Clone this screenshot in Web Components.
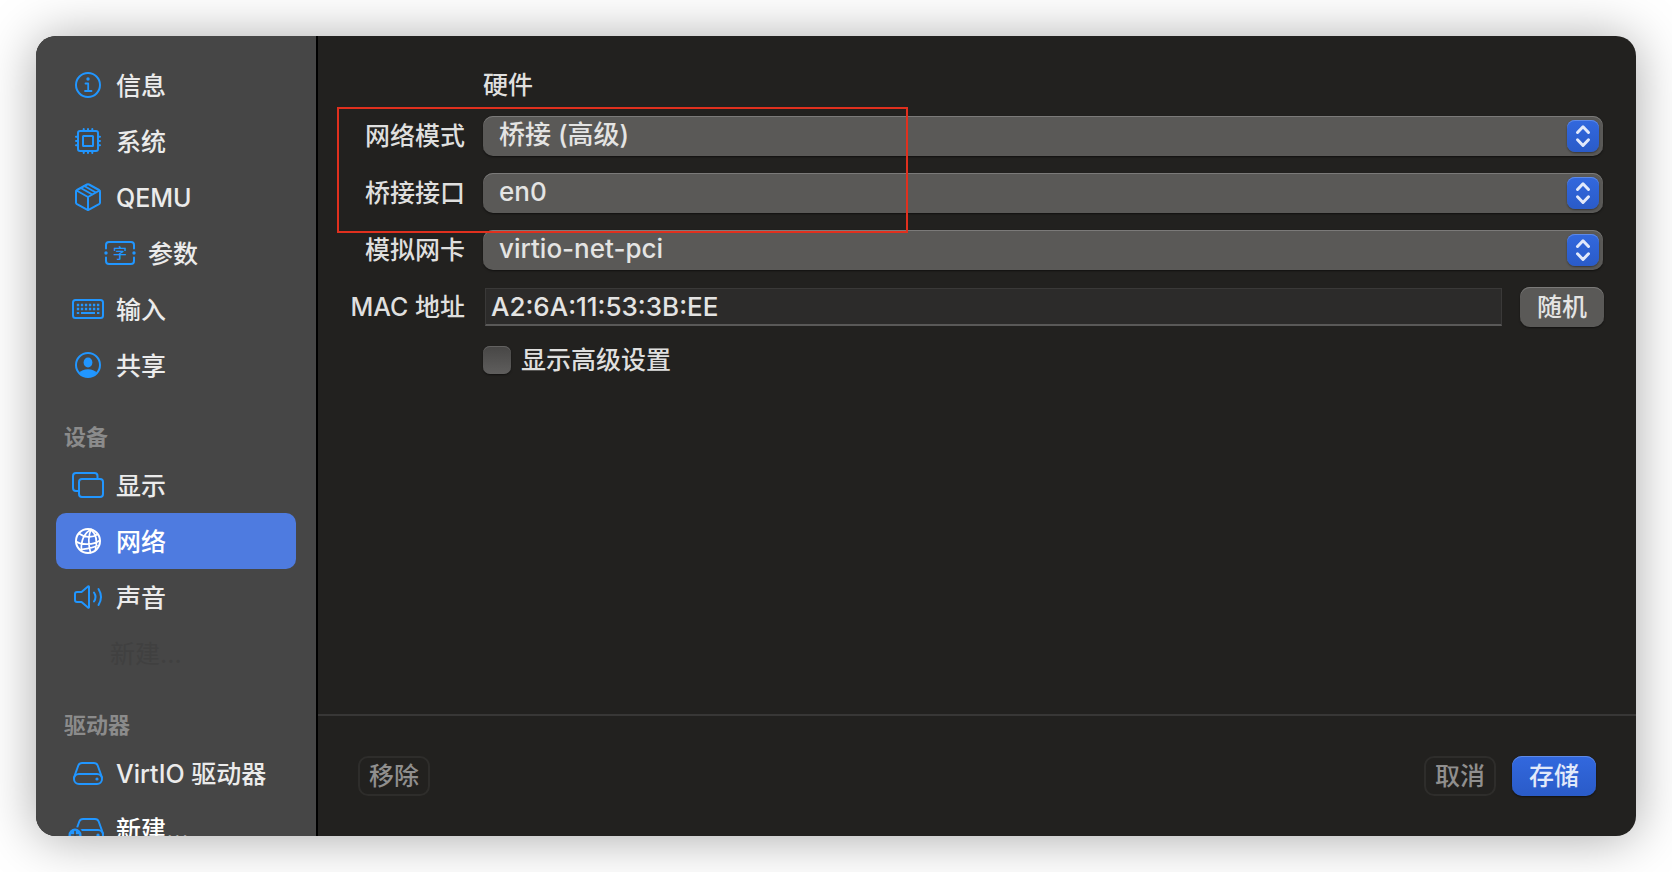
<!DOCTYPE html>
<html lang="zh-CN">
<head>
<meta charset="utf-8">
<meta name="viewport" content="width=device-width, initial-scale=1">
<title>网络</title>
<style>
body {
	margin: 0;
	background: #fff;
	font-family: Inter, "Noto Sans CJK SC", sans-serif;
	font-size: 25px;
	font-weight: 500;
	line-height: 40px;
	color: #dfdfde;
}
</style>
</head>
<body>

<settings-window>
	<side-nav slot="sidebar">
		<nav-item icon="info">信息</nav-item>
		<nav-item icon="cpu">系统</nav-item>
		<nav-item icon="box">QEMU</nav-item>
		<nav-item icon="args" indent>参数</nav-item>
		<nav-item icon="keyboard">输入</nav-item>
		<nav-item icon="person">共享</nav-item>
		<nav-heading>设备</nav-heading>
		<nav-item icon="displays">显示</nav-item>
		<nav-item icon="globe" active>网络</nav-item>
		<nav-item icon="speaker">声音</nav-item>
		<nav-item dimmed>新建...</nav-item>
		<nav-heading>驱动器</nav-heading>
		<nav-item icon="drive">VirtIO 驱动器</nav-item>
		<nav-item icon="driveplus" bright>新建...</nav-item>
	</side-nav>

	<settings-form heading="硬件">
		<select-field label="网络模式" value="桥接 (高级)"></select-field>
		<select-field label="桥接接口" value="en0"></select-field>
		<select-field label="模拟网卡" value="virtio-net-pci"></select-field>
		<text-field label="MAC 地址" value="A2:6A:11:53:3B:EE">
			<push-button>随机</push-button>
		</text-field>
		<check-field label="显示高级设置"></check-field>
	</settings-form>

	<push-button slot="remove" kind="outline">移除</push-button>
	<push-button slot="actions" kind="outline">取消</push-button>
	<push-button slot="actions" kind="primary">存储</push-button>
</settings-window>

<script>
//Icons, all drawn on a 36x36 grid
const drive = `
	<path d="M4 22.5 8.3 10.5Q9.3 8 12 8h12q2.700 0 3.700 2.500L32 22.500"/>
	<rect x="4" y="19" width="28" height="10" rx="5"/>
	<circle cx="27" cy="24" r="1.600" fill="currentColor" stroke="none"/>`;

const icons = {
	info: `
		<circle cx="18" cy="18" r="12"/>
		<circle cx="18" cy="12" r="1.700" fill="currentColor" stroke="none"/>
		<path d="M15.500 16.500h2.700v7.500M15 24h6.500" stroke-width="1.800"/>`,
	cpu: `
		<rect x="8" y="8" width="20" height="20" rx="2"/>
		<rect x="13" y="13" width="10" height="10" rx="0.500"/>
		<path d="M13.700 8V6M18 8V6M22.300 8V6M13.700 28v2M18 28v2M22.300 28v2M8 13.700H6M8 18H6M8 22.300H6M28 13.700h2M28 18h2M28 22.300h2"/>`,
	box: `
		<path d="M17 5.500Q18 5 19 5.500L29 11Q30 11.600 30 12.700V23.500Q30 24.600 29 25.200L19 30.600Q18 31.200 17 30.600L7 25.200Q6 24.600 6 23.500V12.700Q6 11.600 7 11Z"/>
		<path d="M6.500 11.500 18 18 29.500 11.500M18 18V31M10.800 9 22.300 15.500M14.300 7 25.800 13.500"/>`,
	args: `
		<path d="M4 13.500V10q0-3 3-3h22q3 0 3 3v3.500M4 22.500V26q0 3 3 3h22q3 0 3-3v-3.500"/>
		<circle cx="4" cy="18" r="1.700" fill="currentColor" stroke="none"/>
		<circle cx="32" cy="18" r="1.700" fill="currentColor" stroke="none"/>
		<text x="18" y="23" font-size="14" font-weight="500" text-anchor="middle" fill="currentColor" stroke="none">字</text>`,
	keyboard: `
		<rect x="3" y="9" width="30" height="18" rx="2.500"/>
		<path d="M6.800 14h22.500M6.800 18h22.500" stroke-width="2.400" stroke-linecap="butt" stroke-dasharray="2.400 1.620"/>
		<path d="M6.800 22h2.400M11 22h14M27 22h2.400" stroke-width="2.200" stroke-linecap="butt"/>`,
	person: `
		<circle cx="18" cy="18" r="12"/>
		<ellipse cx="18" cy="15.500" rx="4.400" ry="5" fill="currentColor" stroke="none"/>
		<path d="M9.500 26C11 23.500 14 22.300 18 22.300s7 1.200 8.500 3.700Q23 30 18 30t-8.500-4Z" fill="currentColor" stroke="none"/>`,
	displays: `
		<path d="M9 24H6q-3 0-3-3V9q0-3 3-3h18.500Q27.500 6 27.500 9v3"/>
		<rect x="9" y="12" width="24" height="18" rx="3"/>`,
	globe: `
		<circle cx="18" cy="18" r="12"/>
		<path d="M21 6.500C18.500 12 18 20 20.500 29.700M21 6.500C15 9.500 10.500 17 11.500 27.500M21 6.500c5 4.500 6.500 12 4.500 20M9 10.500c5 4 13 4.500 18.500 1M6 18.500c6 4 17.500 3.500 23.700-1M10.500 26.500c4-.500 12-1 16.500-4" stroke-width="1.700"/>`,
	speaker: `
		<path d="M5 15q0-2 2-2h4.500L18 7.400q1-.400 1 .600v20q0 1-1 .600L11.500 23H7q-2 0-2-2Z"/>
		<path d="M24 13.500q3 4.500 0 9M28.500 10q5 8 0 16"/>`,
	drive: drive,
	driveplus: `
		<g transform="translate(1 0)">${drive}</g>
		<circle cx="5" cy="24" r="8" fill="#464646" stroke="none"/>
		<circle cx="5" cy="24" r="6.500" fill="currentColor" stroke="none"/>
		<path d="M5 20.500v7M1.500 24h7" stroke="#464646" stroke-width="1.600"/>`
};

//Base class: fills an open shadow root with what render() gives
class View extends HTMLElement {

	constructor() {
		super();
		this.attachShadow({
			mode: "open"
		});
	}

	connectedCallback() {
		this.shadowRoot.innerHTML = this.render();
	}

	attr(name) {
		return this.getAttribute(name) || "";
	}

}

class SettingsWindow extends View {

	render() {
		return `
<style>
:host {
	display: block;
	box-sizing: border-box;
	height: 100vh;
	padding: 36px;
	overflow: hidden;
}

.window {
	display: grid;
	grid-template-columns: 280px minmax(0, 1fr);
	height: 100%;
	border-radius: 20px;
	overflow: hidden;
	background: #22211f;
	box-shadow: 0 2px 52px rgba(0, 0, 0, 0.34);
}

.main {
	display: flex;
	flex-direction: column;
	border-left: 2px solid #000;
	min-width: 0;
}

.body {
	flex: 1;
}

footer {
	display: flex;
	gap: 16px;
	padding: 40px;
	border-top: 2px solid #383736;
}

.space {
	flex: 1;
}
</style>
<div class="window">
	<slot name="sidebar"></slot>
	<div class="main">
		<div class="body"><slot></slot></div>
		<footer>
			<slot name="remove"></slot>
			<div class="space"></div>
			<slot name="actions"></slot>
		</footer>
	</div>
</div>`;
	}

}

class SideNav extends View {

	render() {
		return `
<style>
:host {
	display: block;
	background: #464646;
	overflow: hidden;
	min-height: 0;
}

nav {
	display: flex;
	flex-direction: column;
	padding: 21px 20px;
}
</style>
<nav><slot></slot></nav>`;
	}

}

class NavHeading extends View {

	render() {
		return `
<style>
:host {
	display: block;
	padding: 24px 8px 0;
	color: #8b8b8b;
	font-size: 22px;
	font-weight: 700;
}
</style>
<slot></slot>`;
	}

}

class NavItem extends View {

	render() {
		const icon = icons[this.attr("icon")] || "";
		return `
<style>
:host {
	display: block;
	color: #ebebeb;
}

a {
	display: flex;
	align-items: center;
	gap: 10px;
	height: 56px;
	padding: 0 14px;
	border-radius: 10px;
	color: inherit;
	text-decoration: none;
	white-space: nowrap;
}

span {
	padding-top: 2px;
}

svg {
	flex: none;
	width: 36px;
	height: 36px;
	overflow: visible;
	color: #2196ff;
}

:host([indent]) a {
	padding-left: 46px;
}

:host([active]) a {
	background: #4e7be0;
	color: #fff;
}

:host([active]) svg {
	color: #fff;
}

:host([bright]) a {
	color: #fff;
}

:host([dimmed]) a {
	padding-left: 54px;
	color: #404040;
	font-weight: 400;
}
</style>
<a href="#">
	${icon ? `<svg viewBox="0 0 36 36" fill="none" stroke="currentColor" stroke-width="2" stroke-linecap="round" stroke-linejoin="round" aria-hidden="true">${icon}</svg>` : ""}
	<span><slot></slot></span>
</a>`;
	}

}

class SettingsForm extends View {

	render() {
		return `
<style>
:host {
	display: block;
	position: relative;
}

form {
	display: flex;
	flex-direction: column;
	gap: 17px;
	padding: 35px 32px 0 0;
}

h2 {
	margin: 0 0 0 165px;
	font: inherit;
	line-height: 28px;
}

/* red frame round the first two rows */
.mark {
	position: absolute;
	left: 19px;
	top: 71px;
	box-sizing: border-box;
	width: 571px;
	height: 126px;
	border: 2px solid #e0301e;
	pointer-events: none;
}
</style>
<form>
	<h2>${this.attr("heading")}</h2>
	<slot></slot>
</form>
<div class="mark"></div>`;
	}

}

const fieldStyle = `
:host {
	display: grid;
	grid-template-columns: 147px minmax(0, 1fr);
	column-gap: 18px;
	align-items: center;
}

label {
	text-align: right;
	white-space: nowrap;
	line-height: 40px;
}

select, input {
	box-sizing: border-box;
	margin: 0;
	font: inherit;
	font-size: 26px;
	color: #e4e4e3;
	appearance: none;
	outline: none;
}
`;

class SelectField extends View {

	render() {
		return `
<style>
${fieldStyle}
.popup {
	display: grid;
	align-items: center;
	padding-right: 1px;
}

select, .arrows {
	grid-area: 1 / 1;
}

select {
	width: 100%;
	height: 40px;
	padding: 0 48px 2px 16px;
	border: 0;
	border-radius: 10px;
	background: #5a5957;
	box-shadow: inset 0 1px #7b7a79, 0 1px 2px rgba(0, 0, 0, 0.5);
	line-height: 38px;
}

.arrows {
	justify-self: end;
	width: 32px;
	height: 32px;
	margin-right: 4px;
	border-radius: 8px;
	background: linear-gradient(#3268de, #2a5bc8);
	box-shadow: inset 0 1px #5f8ae6, 0 1px 2px rgba(0, 0, 0, 0.4);
	pointer-events: none;
}
</style>
<label for="control">${this.attr("label")}</label>
<div class="popup">
	<select id="control"><option>${this.attr("value")}</option></select>
	<svg class="arrows" viewBox="0 0 32 32" fill="none" stroke="#e2e9fa" stroke-width="3" stroke-linecap="round" stroke-linejoin="round" aria-hidden="true">
		<path d="M10.500 12.500 16 6.800l5.500 5.700M10.500 19.800 16 25.500l5.500-5.700"/>
	</svg>
</div>`;
	}

}

class TextField extends View {

	render() {
		return `
<style>
${fieldStyle}
.box {
	display: flex;
	align-items: center;
	gap: 18px;
	padding-left: 2px;
}

input {
	flex: 1;
	min-width: 0;
	height: 38px;
	padding: 0 5px;
	border: 1px solid #3a3938;
	border-bottom: 2px solid #5a5958;
	background: #2c2b2a;
}
</style>
<label for="control">${this.attr("label")}</label>
<div class="box">
	<input id="control" type="text" value="${this.attr("value")}">
	<slot></slot>
</div>`;
	}

}

class CheckField extends View {

	render() {
		return `
<style>
${fieldStyle}
.check {
	grid-column: 2;
	display: flex;
	align-items: center;
	gap: 10px;
	height: 32px;
}

input {
	width: 28px;
	height: 28px;
	border-radius: 7px;
	background: linear-gradient(#474645, #5f5e5d);
	box-shadow: inset 0 1px #636261, 0 1px 2px rgba(0, 0, 0, 0.5);
}
</style>
<div class="check">
	<input id="control" type="checkbox">
	<label for="control">${this.attr("label")}</label>
</div>`;
	}

}

class PushButton extends View {

	render() {
		return `
<style>
:host {
	display: block;
}

button {
	display: block;
	height: 40px;
	margin: 0;
	padding: 0 17px;
	border: 0;
	border-radius: 10px;
	background: #5a5957;
	box-shadow: inset 0 1px #7b7a79, 0 1px 2px rgba(0, 0, 0, 0.5);
	color: #e4e4e3;
	font: inherit;
	line-height: 38px;
	white-space: nowrap;
}

:host([kind="outline"]) button {
	padding: 0 9px;
	border: 2px solid #2e2d2b;
	background: none;
	box-shadow: none;
	color: #908f8e;
	line-height: 34px;
}

:host([kind="primary"]) button {
	background: linear-gradient(#3268de, #2a5bc8);
	box-shadow: inset 0 1px #5f8ae6, 0 1px 2px rgba(0, 0, 0, 0.5);
	color: #e2e9fa;
}
</style>
<button type="button"><slot></slot></button>`;
	}

}

//Define custom html elements
window.customElements.define("settings-window", SettingsWindow);
window.customElements.define("side-nav", SideNav);
window.customElements.define("nav-heading", NavHeading);
window.customElements.define("nav-item", NavItem);
window.customElements.define("settings-form", SettingsForm);
window.customElements.define("select-field", SelectField);
window.customElements.define("text-field", TextField);
window.customElements.define("check-field", CheckField);
window.customElements.define("push-button", PushButton);
</script>
</body>
</html>
